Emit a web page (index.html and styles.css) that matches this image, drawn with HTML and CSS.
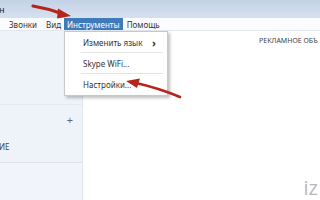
FILE: index.html
```html
<!DOCTYPE html>
<html lang="ru">
<head>
<meta charset="utf-8">
<link rel="stylesheet" href="styles.css">
</head>
<body>
<div class="app">
  <div class="titlebar"><span class="title">н</span></div>
  <div class="menubar">
    <span class="mi">Звонки</span>
    <span class="mi tight">Вид</span>
    <span class="mi active">Инструменты</span>
    <span class="mi">Помощь</span>
  </div>
  <div class="content">
    <div class="sidebar">
      <div class="sb-top"></div>
      <div class="sb-mid">
        <div class="sb-add">+</div>
        <div class="sb-label">ИЕ</div>
      </div>
      <div class="sb-bottom"></div>
    </div>
    <div class="main">
      <div class="ad">РЕКЛАМНОЕ ОБЪ</div>
      <div class="spacer"></div>
      <div class="wm">iz</div>
    </div>
  </div>
  <div class="dropdown">
    <div class="dd-item"><span>Изменить язык</span><span class="chev">›</span></div>
    <div class="dd-sep"></div>
    <div class="dd-item">Skype WiFi...</div>
    <div class="dd-sep"></div>
    <div class="dd-item">Настройки...</div>
  </div>
  <svg class="arrow arrow1" width="50" height="20" viewBox="0 0 50 20">
    <path d="M2 4 C14 6 24 9 32 12" stroke="#b8231a" stroke-width="3.2" fill="none" stroke-linecap="round"/>
    <path d="M27 6.5 L40 14 L26 16.5 Z" fill="#b8231a"/>
  </svg>
  <svg class="arrow arrow2" width="58" height="22" viewBox="0 0 58 22">
    <path d="M56 19 C44 14 30 9 12 5" stroke="#b8231a" stroke-width="2.6" fill="none" stroke-linecap="round"/>
    <path d="M16 0.5 L2 3 L13 10 Z" fill="#b8231a"/>
  </svg>
</div>
</body>
</html>
```
FILE: styles.css
```css
* { box-sizing: border-box; }
html, body { margin: 0; padding: 0; }
body {
  font-family: "Noto Sans", "Liberation Sans", sans-serif;
  color: #333;
  background: #fff;
}
.app {
  position: relative;
  width: 320px;
  height: 200px;
  overflow: hidden;
  display: flex;
  flex-direction: column;
}
.titlebar {
  height: 18px;
  background: linear-gradient(#c3d2e7, #d6e1ef);
  display: flex;
  align-items: center;
}
.title {
  font-size: 9px;
  color: #222;
  margin-left: -1px;
}
.menubar {
  height: 13px;
  background: #fbfcfe;
  border-bottom: 1px solid #e3e8f0;
  display: flex;
  align-items: stretch;
  padding-left: 6px;
  font-size: 8px;
}
.mi {
  display: flex;
  align-items: center;
  padding: 0 3px;
  margin-right: 3px;
  color: #333;
}
.mi.tight { margin-right: 0; }
.mi.active {
  background: #3f7bb9;
  color: #fff;
  margin-right: 1px;
}
.content {
  flex: 1;
  display: flex;
  min-height: 0;
}
.sidebar {
  flex: 0 0 83px;
  background: #eef2f9;
  border-right: 1px solid #e2e6ee;
  display: flex;
  flex-direction: column;
}
.sb-top {
  height: 74px;
  border-bottom: 1px solid #e6eaf2;
}
.sb-mid {
  height: 58px;
  border-bottom: 1px solid #dfe4ec;
  display: flex;
  flex-direction: column;
}
.sb-add {
  align-self: flex-end;
  margin-right: 9px;
  margin-top: 10px;
  font-size: 11px;
  line-height: 10px;
  color: #666;
}
.sb-label {
  margin-top: 16px;
  font-size: 8px;
  color: #444;
  margin-left: -1px;
}
.sb-bottom {
  flex: 1;
  background: #f1f4fa;
}
.main {
  flex: 1;
  min-width: 0;
  display: flex;
  flex-direction: column;
  background: #fff;
}
.ad {
  margin-top: 5px;
  margin-left: 176px;
  font-size: 7px;
  white-space: nowrap;
  color: #444;
}
.spacer { flex: 1; }
.wm {
  align-self: flex-end;
  margin-right: 2px;
  margin-bottom: 1px;
  font-family: "Open Sans", "Noto Sans", sans-serif;
  font-size: 20px;
  line-height: 22px;
  color: #b8b8b8;
  white-space: nowrap;
}
.dropdown {
  position: absolute;
  left: 64px;
  top: 31px;
  width: 104px;
  height: 65px;
  background: #fff;
  border: 1px solid #c8c8c8;
  box-shadow: 2px 2px 3px rgba(0,0,0,0.25);
  padding: 0 0 2px;
  font-size: 8px;
  color: #333;
}
.dd-item {
  height: 20px;
  display: flex;
  align-items: center;
  justify-content: space-between;
  padding: 0 11px 0 18px;
}
.chev { font-size: 11px; font-weight: bold; }
.dd-sep {
  height: 1px;
  background: #e4e4e4;
  margin: 0 4px 0 16px;
}
.arrow { position: absolute; }
.arrow1 { left: 31px; top: 2px; }
.arrow2 { left: 124px; top: 78px; }
```
